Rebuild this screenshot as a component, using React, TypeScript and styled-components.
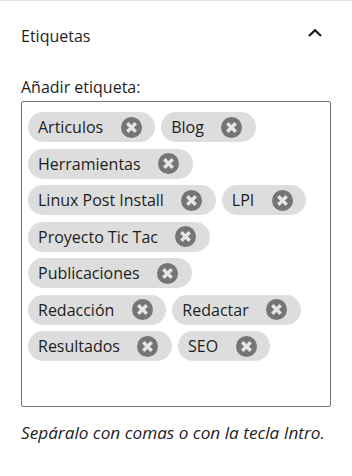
import React from 'react'
import styled, { createGlobalStyle } from 'styled-components'

const GlobalStyle = createGlobalStyle`
  html, body {
    margin: 0;
    padding: 0;
    background: #ffffff;
  }
  body {
    font-family: 'Open Sans', 'Noto Sans', sans-serif;
    color: #1e1e1e;
  }
`

const Panel = styled.section`
  width: 352px;
  border-top: 1px solid #e0e0e0;
  box-sizing: border-box;
  padding: 0 21px 20px 21px;
`

const Header = styled.div`
  display: flex;
  align-items: center;
  justify-content: space-between;
  height: 69px;
`

const Title = styled.h2`
  margin: 0;
  font-size: 16px;
  line-height: 20px;
  font-weight: 400;
  color: #1e1e1e;
`

const Toggle = styled.button`
  display: flex;
  align-items: center;
  justify-content: center;
  width: 24px;
  height: 24px;
  padding: 0;
  margin: 0 4px 6px 0;
  border: none;
  background: transparent;
`

const Label = styled.label`
  display: block;
  font-size: 16px;
  line-height: 20px;
  margin: 7px 0 4px 0;
`

const Field = styled.div`
  display: flex;
  flex-wrap: wrap;
  align-content: flex-start;
  gap: 6.5px 6px;
  box-sizing: border-box;
  height: 306px;
  padding: 10px 6px;
  border: 1px solid #757575;
  border-radius: 2px;
`

const Token = styled.span`
  display: inline-flex;
  align-items: center;
  height: 30px;
  padding: 0 9px 0 10px;
  border-radius: 15px;
  background: #dddddd;
  font-size: 16px;
  color: #1e1e1e;
`

const Remove = styled.span`
  display: flex;
  align-items: center;
  justify-content: center;
  margin-left: 13px;
  width: 30px;
  height: 30px;
`

const Help = styled.p`
  margin: 14px 0 0 0;
  font-size: 17.2px;
  font-style: italic;
  color: #1e1e1e;
`

const tags = [
  'Articulos',
  'Blog',
  'Herramientas',
  'Linux Post Install',
  'LPI',
  'Proyecto Tic Tac',
  'Publicaciones',
  'Redacción',
  'Redactar',
  'Resultados',
  'SEO',
]

const RemoveIcon = () => (
  <svg width="21" height="21" viewBox="0 0 20 20">
    <circle cx="10" cy="10" r="10" fill="#757575" />
    <path d="M6 6 L14 14 M14 6 L6 14" stroke="#e6e6e6" strokeWidth="3.2" strokeLinecap="butt" />
  </svg>
)

export default function App() {
  return (
    <>
      <GlobalStyle />
      <Panel>
        <Header>
          <Title>Etiquetas</Title>
          <Toggle aria-label="Cerrar">
            <svg width="14" height="8" viewBox="0 0 14 8">
              <path d="M1 7 L7 1.2 L13 7" fill="none" stroke="#1e1e1e" strokeWidth="2.3" />
            </svg>
          </Toggle>
        </Header>
        <Label>Añadir etiqueta:</Label>
        <Field>
          {tags.map((tag) => (
            <Token key={tag}>
              {tag}
              <Remove>
                <RemoveIcon />
              </Remove>
            </Token>
          ))}
        </Field>
        <Help>Sepáralo con comas o con la tecla Intro.</Help>
      </Panel>
    </>
  )
}
